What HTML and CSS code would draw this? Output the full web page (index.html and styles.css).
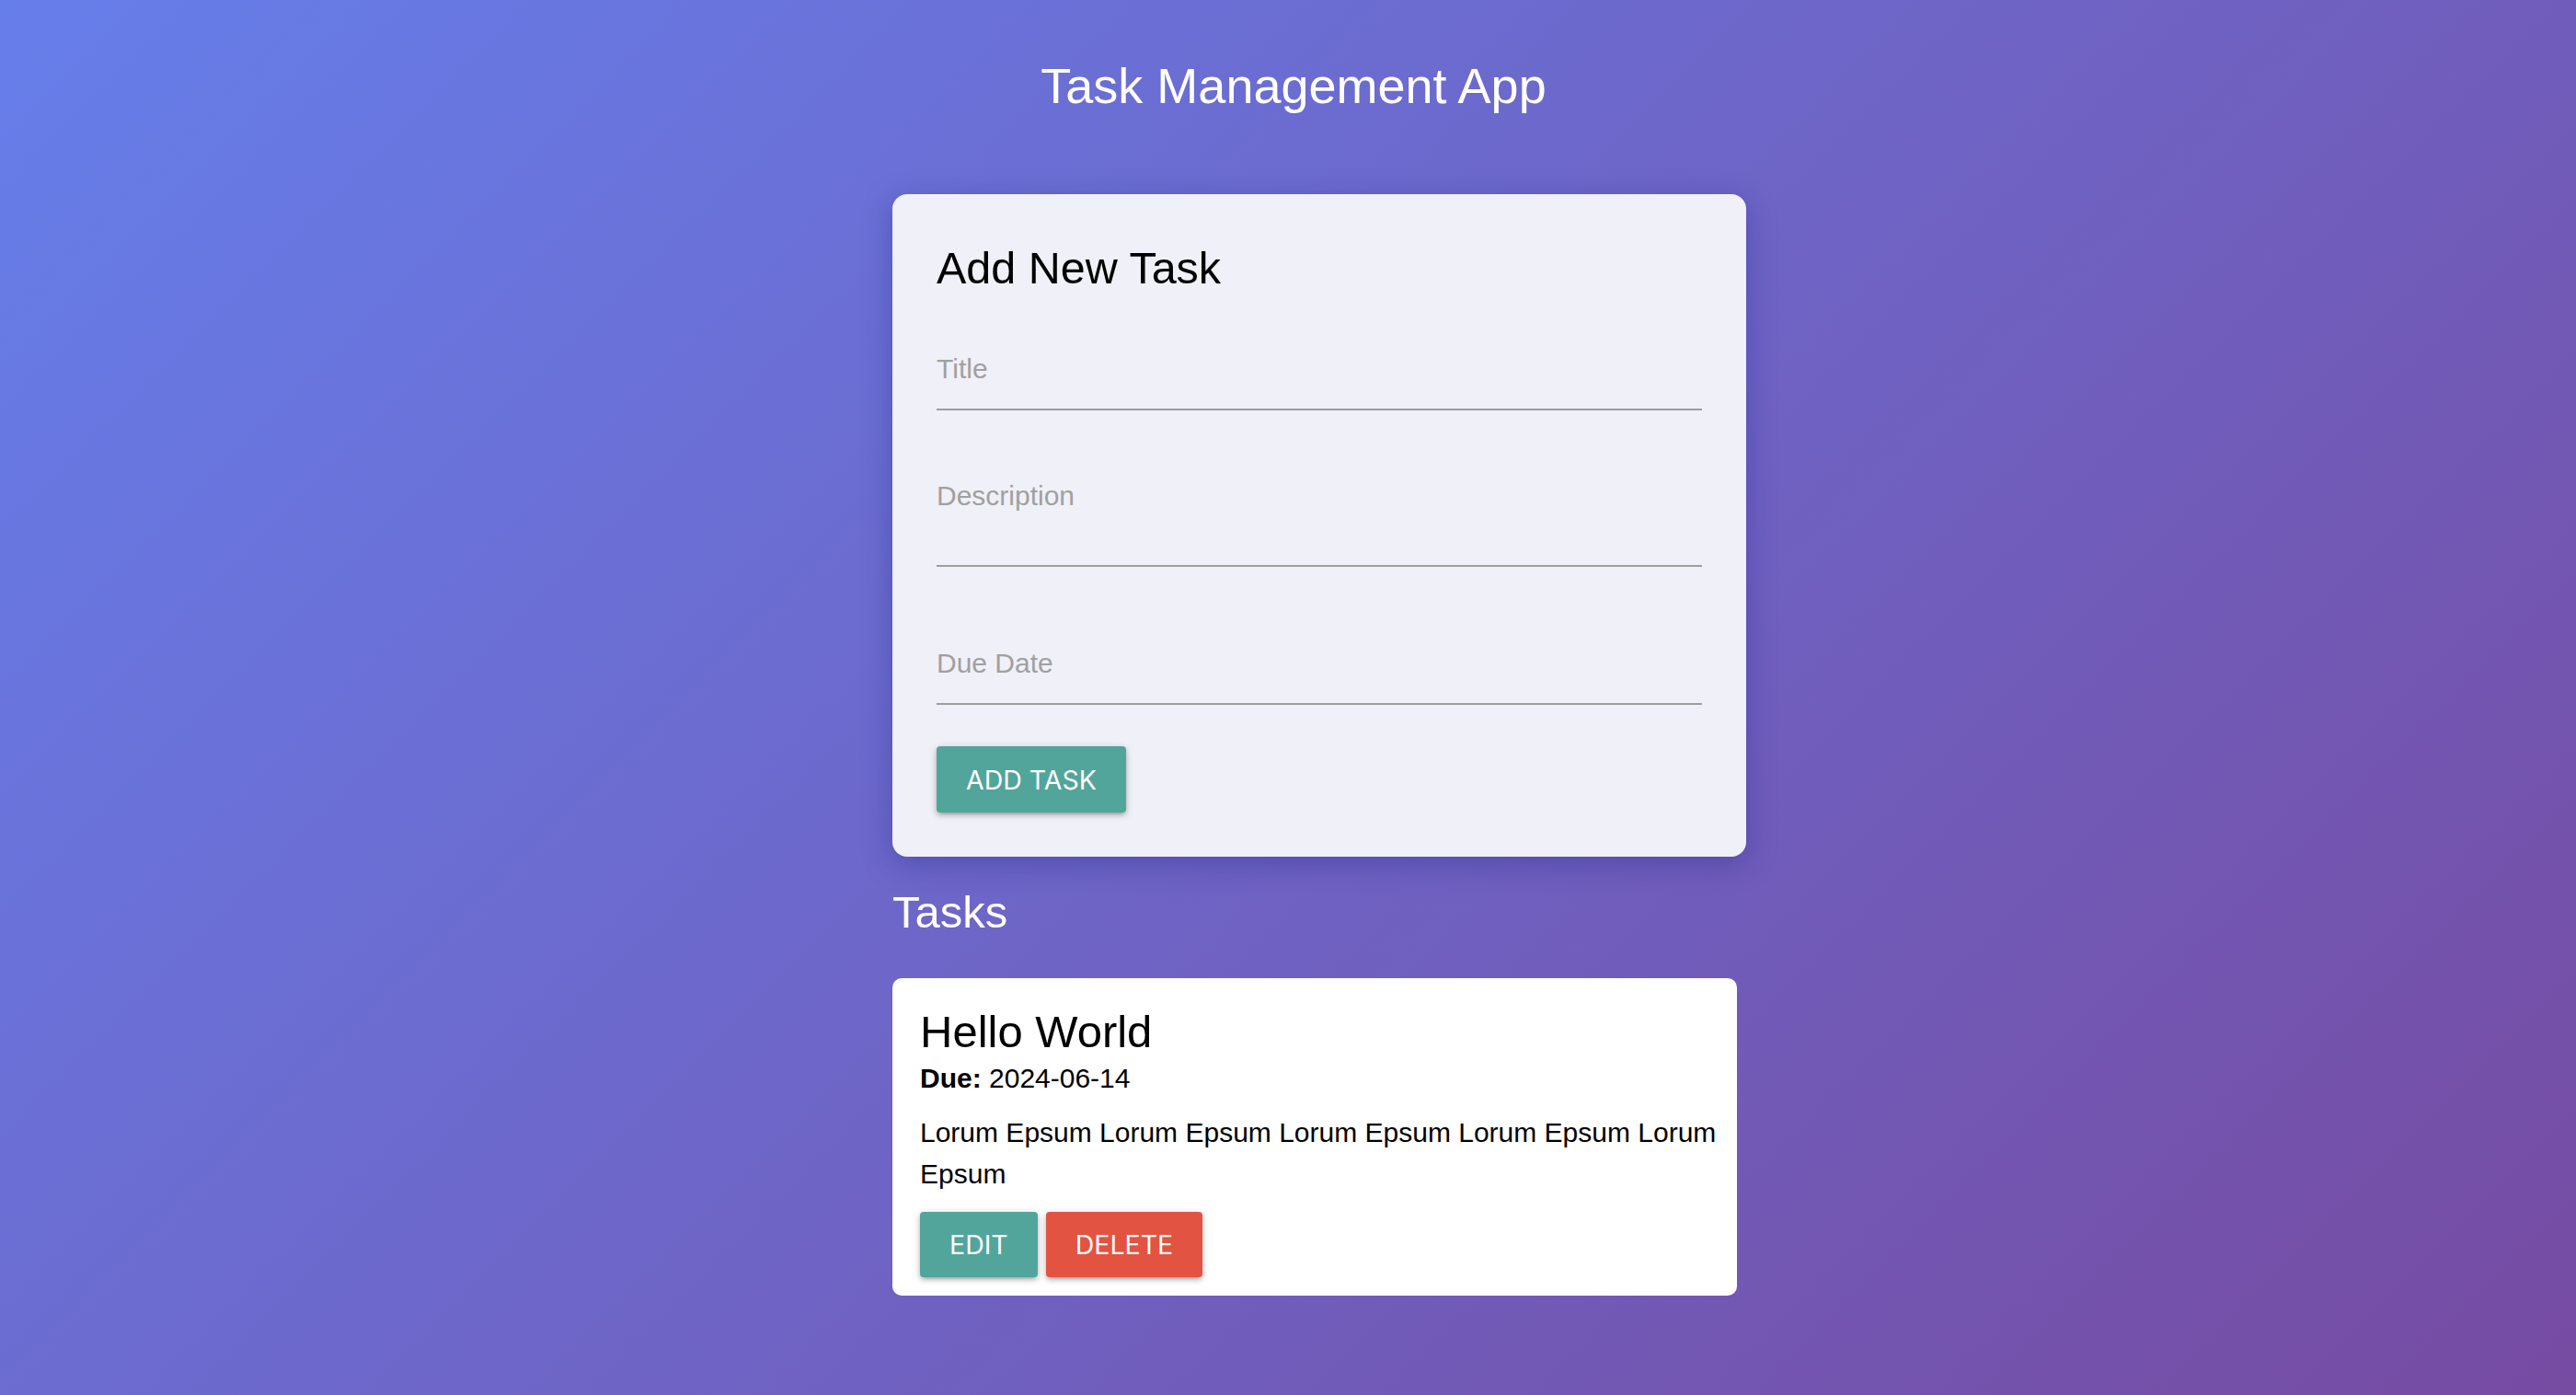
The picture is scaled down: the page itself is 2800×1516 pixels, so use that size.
FILE: index.html
```html
<!DOCTYPE html>
<html lang="en">
<head>
<meta charset="utf-8">
<title>Task Management App</title>
<link rel="stylesheet" href="styles.css">
</head>
<body>
<div class="app">
  <h1 class="app-title">Task Management App</h1>
  <main class="content">
    <section class="form-card">
      <h2 class="form-heading">Add New Task</h2>
      <input class="field field-title" type="text" placeholder="Title">
      <textarea class="field field-desc" placeholder="Description"></textarea>
      <input class="field field-date" type="text" placeholder="Due Date">
      <button class="btn btn-teal btn-add">Add Task</button>
    </section>
    <h2 class="tasks-heading">Tasks</h2>
    <article class="task-card">
      <h3 class="task-title">Hello World</h3>
      <p class="task-due"><strong>Due:</strong> 2024-06-14</p>
      <p class="task-desc">Lorum Epsum Lorum Epsum Lorum Epsum Lorum Epsum Lorum Epsum</p>
      <div class="task-actions">
        <button class="btn btn-teal btn-edit">Edit</button>
        <button class="btn btn-red btn-delete">Delete</button>
      </div>
    </article>
  </main>
</div>
</body>
</html>
```
FILE: styles.css
```css
html, body {
  margin: 0;
  height: 100%;
}

body {
  background: linear-gradient(135deg, #667eea 0%, #764ba2 100%);
  font-family: "Liberation Sans", Arial, Helvetica, sans-serif;
  color: #000;
}

.app {
  padding-top: 62px;
}

.app-title {
  margin: 0 0 0 12px;
  text-align: center;
  color: #fff;
  font-size: 54px;
  font-weight: 400;
  line-height: normal;
}

.content {
  width: 928px;
  margin: 87px 0 0 calc(50% - 430px);
}

.form-card {
  background: #f0f0f8;
  border-radius: 16px;
  padding: 52px 48px 48px;
  box-shadow: 0 8px 32px rgba(31, 38, 135, 0.37);
  display: flex;
  flex-direction: column;
  align-items: flex-start;
}

.form-heading {
  margin: 0;
  font-size: 48.5px;
  font-weight: 400;
  line-height: normal;
}

.field {
  display: block;
  width: 100%;
  box-sizing: border-box;
  border: none;
  border-bottom: 2px solid #9e9e9e;
  border-radius: 0;
  background: transparent;
  font-family: "Liberation Sans", Arial, Helvetica, sans-serif;
  font-size: 30px;
  color: #000;
  padding: 0;
  margin: 0;
  outline: none;
}

.field::placeholder {
  color: #a0a0a0;
  opacity: 1;
}

.field-title {
  height: 88px;
  margin-top: 39px;
}

.field-desc {
  height: 126px;
  margin-top: 44px;
  padding-top: 26px;
  line-height: 1.5;
  resize: none;
  overflow: hidden;
}

.field-date {
  height: 88px;
  margin-top: 62px;
}

.btn {
  display: inline-flex;
  align-items: center;
  justify-content: center;
  height: 72px;
  padding: 0 32px;
  border: none;
  border-radius: 4px;
  color: #fff;
  font-family: Inter, "Liberation Sans", sans-serif;
  font-size: 28.5px;
  font-weight: 400;
  letter-spacing: 0;
  text-transform: uppercase;
  box-shadow: 0 3px 4px 0 rgba(0, 0, 0, 0.14), 0 5px 2px -4px rgba(0, 0, 0, 0.12), 0 2px 9px 0 rgba(0, 0, 0, 0.2);
  cursor: pointer;
}

.btn-teal {
  background: #52a59b;
}

.btn-red {
  background: #e25342;
}

.btn-add {
  margin-top: 45px;
}

.tasks-heading {
  margin: 32px 0 0;
  color: #fff;
  font-size: 49px;
  font-weight: 400;
  line-height: normal;
}

.task-card {
  margin-top: 44px;
  width: 918px;
  box-sizing: border-box;
  background: #fff;
  border-radius: 10px;
  padding: 30px 20px 20px 30px;
}

.task-title {
  margin: 0;
  font-size: 49px;
  font-weight: 400;
  line-height: normal;
}

.task-due,
.task-desc {
  margin: 0;
  font-size: 30px;
  line-height: 1.5;
}

.task-desc {
  margin-top: 14px;
}

.task-actions {
  display: flex;
  gap: 9px;
  margin-top: 19px;
}

.task-actions .btn {
  height: 71px;
}
```
